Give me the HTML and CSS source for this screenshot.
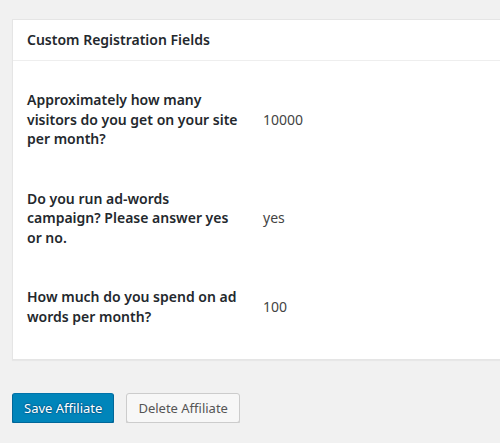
FILE: index.html
```html
<!DOCTYPE html>
<html>
<head>
<meta charset="utf-8">
<link rel="stylesheet" href="styles.css">
</head>
<body>
<div class="wrap">
  <div class="postbox">
    <h2 class="hndle">Custom Registration Fields</h2>
    <div class="inside">
      <div class="form-table">
        <div class="row">
          <div class="label">Approximately how many visitors do you get on your site per month?</div>
          <div class="value">10000</div>
        </div>
        <div class="row">
          <div class="label">Do you run ad-words campaign? Please answer yes or no.</div>
          <div class="value">yes</div>
        </div>
        <div class="row">
          <div class="label">How much do you spend on ad words per month?</div>
          <div class="value">100</div>
        </div>
      </div>
    </div>
  </div>
  <div class="submit">
    <button class="button button-primary">Save Affiliate</button>
    <button class="button button-secondary">Delete Affiliate</button>
  </div>
</div>
</body>
</html>
```

FILE: styles.css
```css
html, body {
  margin: 0;
  padding: 0;
  background: #f1f1f1;
}
body {
  font-family: "Noto Sans", "Open Sans", sans-serif;
  font-size: 14px;
  color: #23282d;
}
.wrap {
  padding: 19px 0 0 12px;
}
.postbox {
  background: #fff;
  border: 1px solid #e5e5e5;
  border-right: 0;
  box-shadow: 0 1px 1px rgba(0,0,0,0.04);
}
.hndle {
  margin: 0;
  padding: 10px 14px;
  font-size: 14px;
  font-weight: 600;
  line-height: 20px;
  border-bottom: 1px solid #eee;
}
.inside {
  padding: 9px 14px 13px;
}
.row {
  display: grid;
  grid-template-columns: 226px 1fr;
  align-items: center;
}
.label {
  padding: 20px 10px 20px 0;
  font-weight: 600;
  line-height: 19.5px;
}
.value {
  padding-left: 10px;
  color: #444;
  line-height: 19.5px;
}
.submit {
  display: flex;
  gap: 12px;
  margin-top: 33px;
}
.button {
  height: 30px;
  padding: 0 11px 1px;
  font-family: inherit;
  font-size: 13px;
  line-height: 28px;
  border-radius: 3px;
  border: 1px solid;
  cursor: pointer;
}
.button-primary {
  background: #0085ba;
  border-color: #0073aa #006799 #006799;
  box-shadow: 0 1px 0 #006799;
  color: #fff;
  text-shadow: 0 -1px 1px #006799, 1px 0 1px #006799, 0 1px 1px #006799, -1px 0 1px #006799;
}
.button-secondary {
  background: #f7f7f7;
  border-color: #ccc;
  box-shadow: 0 1px 0 #ccc;
  color: #555;
}
```
